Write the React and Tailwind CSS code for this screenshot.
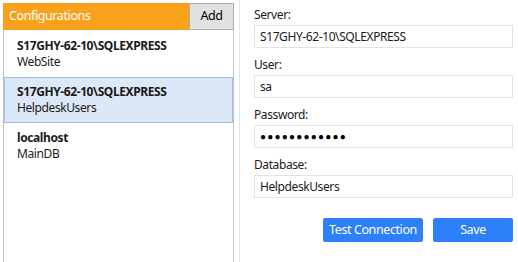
export default function App() {
  const items = [
    { server: "S17GHY-62-10\\SQLEXPRESS", db: "WebSite" },
    { server: "S17GHY-62-10\\SQLEXPRESS", db: "HelpdeskUsers", selected: true },
    { server: "localhost", db: "MainDB" },
  ];
  const font = { fontFamily: '"Noto Sans", "Open Sans", sans-serif' };
  return (
    <div className="w-[518px] h-[262px] bg-white flex text-[12px] tracking-[-0.4px] text-[#1a1a1a] overflow-hidden" style={font}>
      <div className="w-[234px] h-[262px] pt-[3px] pl-[3px] flex flex-col">
        <div className="flex-1 flex flex-col border-r border-l border-[#c4c4c4]">
          <div className="h-[27px] flex bg-[#f9a11b] -ml-px -mr-px">
            <div className="flex-1 text-white text-[12.5px] pl-[6px] flex items-center">Configurations</div>
            <button className="w-[45px] bg-[#e1e1e1] border border-[#adadad] text-[12.5px] text-black flex items-center justify-center">Add</button>
          </div>
          <div className="flex flex-col pt-px">
            {items.map((it, i) => (
              <div
                key={i}
                className={`h-[46px] pl-[12px] flex flex-col justify-center leading-[16px] border ${it.selected ? "bg-[#dce8f8] border-[#9ebde8]" : "border-transparent"}`}
              >
                <div className="font-bold">{it.server}</div>
                <div>{it.db}</div>
              </div>
            ))}
          </div>
        </div>
      </div>
      <div className="w-[5px]" />
      <div className="flex-1 border-l border-[#e6e6e6] pl-[14px] pr-[5px] pt-[5px] flex flex-col">
        {[
          ["Server:", "S17GHY-62-10\\SQLEXPRESS"],
          ["User:", "sa"],
          ["Password:", "●●●●●●●●●●●●"],
          ["Database:", "HelpdeskUsers"],
        ].map(([label, val], i) => (
          <div key={i} className="flex flex-col">
            <div className="h-[20px] flex items-center">{label}</div>
            <div className={`h-[23px] border border-[#e3e3e3] flex items-center pl-[5px] mb-[7px] ${label === "Password:" ? "text-[10px] tracking-[1.2px] text-black" : ""}`}>{val}</div>
          </div>
        ))}
        <div className="flex justify-end gap-[10px] mt-[13px]">
          <button className="w-[100px] h-[24px] bg-[#2d80f7] text-white text-[12.5px] rounded-[2px]">Test Connection</button>
          <button className="w-[80px] h-[24px] bg-[#2d80f7] text-white text-[12.5px] rounded-[2px]">Save</button>
        </div>
      </div>
    </div>
  );
}
